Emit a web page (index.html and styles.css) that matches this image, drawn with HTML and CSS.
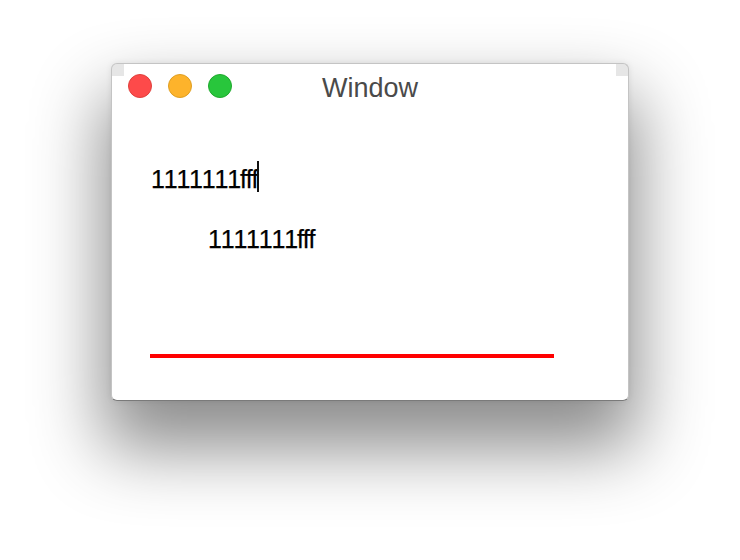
FILE: index.html
```html
<!DOCTYPE html>
<html>
<head>
<meta charset="utf-8">
<title>Window</title>
<link rel="stylesheet" href="styles.css">
</head>
<body>
<div class="window">
  <div class="titlebar">
    <div class="lights">
      <span class="light red"></span>
      <span class="light yellow"></span>
      <span class="light green"></span>
    </div>
    <div class="title">Window</div>
  </div>
  <div class="content">
    <div class="field">1111111fff<span class="caret"></span></div>
    <div class="label">1111111fff</div>
    <div class="redline"></div>
  </div>
</div>
</body>
</html>
```
FILE: styles.css
```css
html, body {
  margin: 0;
  padding: 0;
  background: #ffffff;
}
body {
  width: 740px;
  height: 560px;
  overflow: hidden;
  font-family: "Liberation Sans", Arial, sans-serif;
}
.window {
  box-sizing: border-box;
  margin: 63px 0 0 111px;
  width: 518px;
  height: 338px;
  border: 1px solid #c4c4c4;
  border-bottom-color: #7a7a7a;
  border-radius: 6px;
  background:
    linear-gradient(#e6e6e6, #e6e6e6) left top / 12px 12px no-repeat,
    linear-gradient(#e6e6e6, #e6e6e6) right top / 12px 12px no-repeat,
    #ffffff;
  box-shadow: 0 40px 70px 8px rgba(0, 0, 0, 0.45), 0 0 6px rgba(0, 0, 0, 0.08);
}
.titlebar {
  height: 44px;
  display: grid;
  grid-template-columns: 1fr auto 1fr;
  align-items: center;
}
.lights {
  display: flex;
  gap: 16px;
  padding-left: 16px;
}
.light {
  box-sizing: border-box;
  width: 24px;
  height: 24px;
  border-radius: 50%;
  display: block;
}
.red { background: #fd4a4a; border: 1px solid #e0403c; }
.yellow { background: #fdb32b; border: 1px solid #df9f22; }
.green { background: #28c63c; border: 1px solid #1fa92d; }
.title {
  font-size: 27px;
  color: #4a4a4a;
  line-height: 30px;
  padding-top: 3px;
}
.content {
  padding-left: 39px;
}
.field, .label {
  font-size: 25px;
  line-height: 30px;
  letter-spacing: -1.2px;
  font-variant-ligatures: none;
  font-kerning: none;
  color: #000;
  -webkit-text-stroke: 0.25px #000;
}
.field {
  margin-top: 56px;
}
.caret {
  display: inline-block;
  width: 2px;
  height: 31px;
  background: #111;
  vertical-align: top;
  margin-left: 0;
  margin-top: -3px;
}
.label {
  margin-top: 30px;
  margin-left: 57px;
}
.redline {
  margin-top: 100px;
  margin-left: -1px;
  width: 404px;
  height: 4px;
  background: #ff0000;
}
```
